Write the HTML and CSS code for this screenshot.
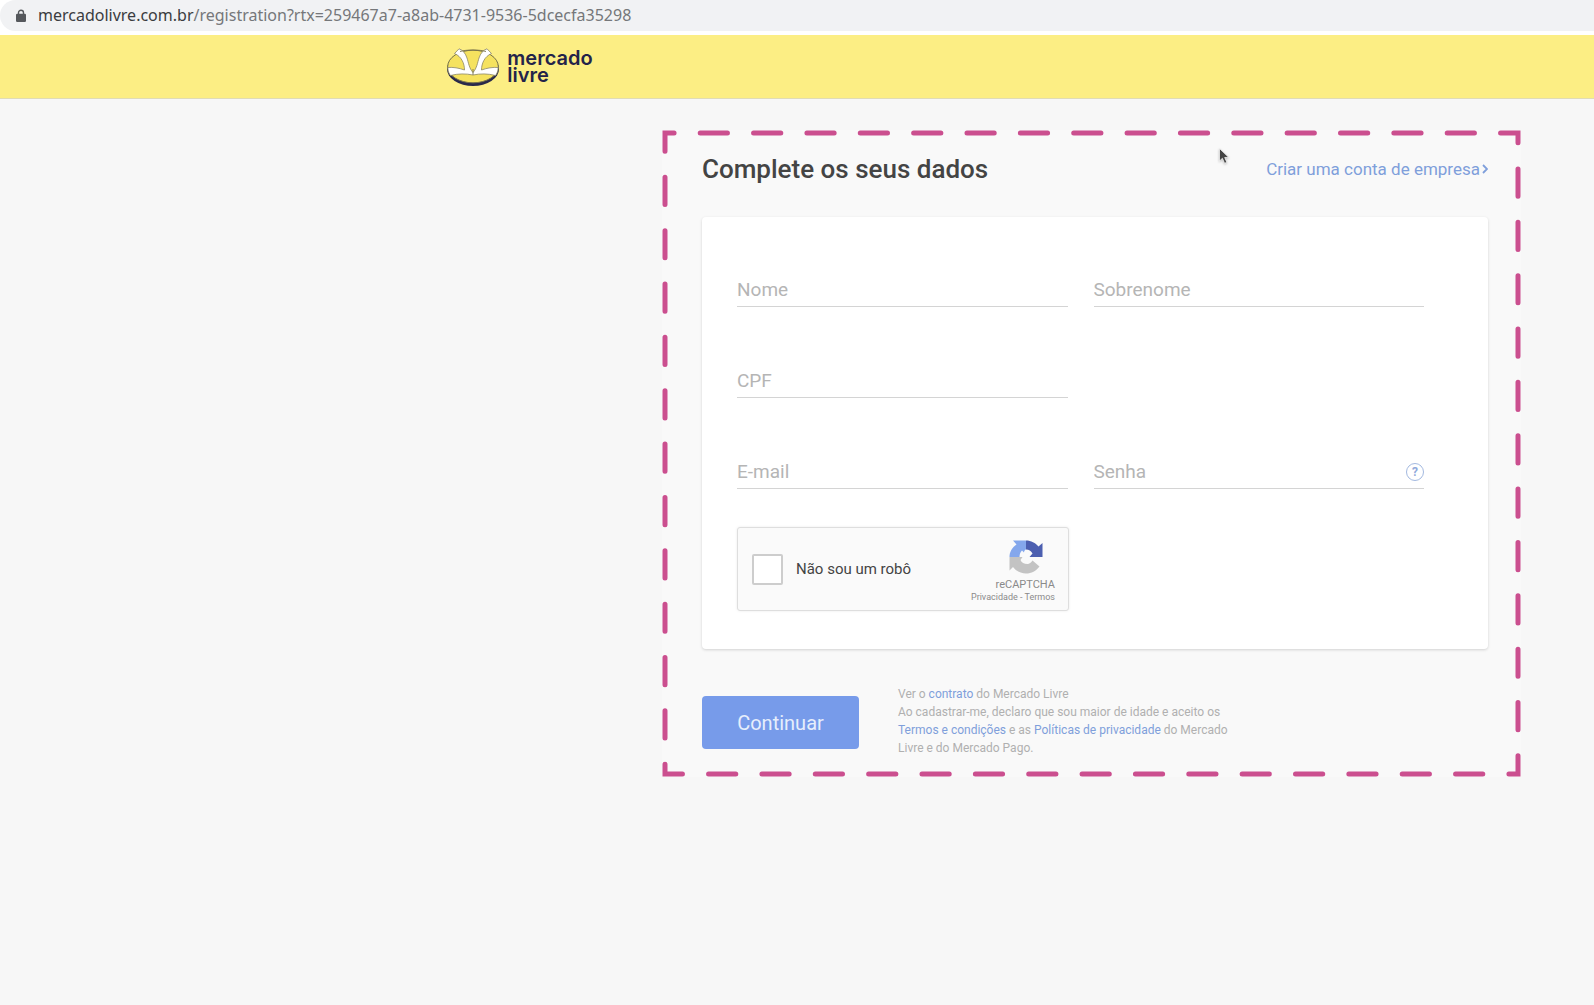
FILE: index.html
```html
<!DOCTYPE html>
<html lang="pt-BR">
<head>
<meta charset="utf-8">
<meta name="viewport" content="width=device-width, initial-scale=1">
<title>Mercado Livre</title>
<link rel="stylesheet" href="styles.css">
</head>
<body>
<div class="browser-bar">
  <div class="address">
    <svg class="lock" viewBox="0 0 10 13" aria-hidden="true"><path d="M2.5 6V3.7a2.5 2.5 0 0 1 5 0V6" fill="none" stroke="#55585c" stroke-width="1.4"/><rect y="4.8" width="10" height="8.2" rx="1.2" fill="#55585c"/></svg>
    <span class="url"><span class="host">mercadolivre.com.br</span>/registration?rtx=259467a7-a8ab-4731-9536-5dcecfa35298</span>
  </div>
</div>

<header class="site-header">
  <a class="logo" href="#" aria-label="Mercado Livre">
    <svg class="logo-mark" viewBox="0 0 54 38" aria-hidden="true">
      <ellipse cx="27" cy="21" rx="26" ry="17" fill="#29294a"/>
      <ellipse cx="27" cy="18.5" rx="25.3" ry="16.3" fill="#f5e25f" stroke="#77724a" stroke-width="1"/>
      <path d="M1.800 19.500C7 19 13 20 18.500 22C18.500 15.500 15.500 8.500 8.500 5.500L13 .8C17 2 19.500 5.500 21 10C22.500 14.500 23 20 27 24.500C31 20 31.500 14.500 33 10C34.500 5.500 37 2 41 .8L45.500 5.500C38.500 8.500 35.500 15.500 35.500 22C41 20 47 19 52.200 19.500C52 23.500 51 25.500 49.500 27.500C42 25.500 34 25.500 27 27C20 25.500 12 25.500 4.500 27.500C3 25.500 2 23.500 1.800 19.500Z" fill="#fff" stroke="#8b8763" stroke-width=".8" stroke-linejoin="round"/>
      <path d="M14 3.500C20 1.500 34 1.500 40 3.500M27 21V27" fill="none" stroke="#77724a" stroke-width=".9"/>
    </svg>
    <span class="logo-name">mercado<br>livre</span>
  </a>
</header>

<main class="page">
  <form class="signup">
    <svg class="outline" aria-hidden="true"><rect x="3" y="3" pathLength="5600"/></svg>
    <svg class="cursor" viewBox="0 0 10 16" aria-hidden="true"><path d="M.5.500V13L3.400 10.300L5.600 15.300L7.800 14.300L5.700 9.500L9.600 9.300Z" fill="#444" stroke="#fff" stroke-width=".7"/></svg>

    <div class="signup-head">
      <h1>Complete os seus dados</h1>
      <a class="company" href="#">Criar uma conta de empresa<svg class="chevron" viewBox="0 0 6 10" aria-hidden="true"><path d="M1 1L5 5L1 9" fill="none" stroke="currentColor" stroke-width="1.8"/></svg></a>
    </div>

    <div class="card">
      <div class="fields">
        <input class="field" type="text" placeholder="Nome" aria-label="Nome">
        <input class="field" type="text" placeholder="Sobrenome" aria-label="Sobrenome">
        <input class="field field-single" type="text" placeholder="CPF" aria-label="CPF">
        <input class="field" type="email" placeholder="E-mail" aria-label="E-mail">
        <div class="password">
          <input class="field" type="password" placeholder="Senha" aria-label="Senha">
          <button class="help" type="button">?</button>
        </div>
      </div>

      <div class="captcha">
        <input class="captcha-box" type="checkbox" id="robot">
        <label class="captcha-label" for="robot">Não sou um robô</label>
        <div class="captcha-brand">
          <svg class="captcha-mark" viewBox="0 0 34 34" aria-hidden="true">
            <path d="M17 .5H4L7.500 4.500C3 7.500.5 12 .5 17H10.500C10.500 14 11.500 12 13 10.500L15 12.500C15.200 10.800 16 9.800 17 9.500Z" fill="#84a7ec"/>
            <path d="M17 .5C22 .5 26.500 3 29.500 6.500L33.500 3V17H20.500L23.500 13.500C22 11 20 9.500 17 9.500Z" fill="#4c5fb0"/>
            <path d="M.5 17V30.500L4 27C7 31 12 33.500 17 33.500C22.500 33.500 27 31 30.500 26.500L23.500 20.500C22 22.800 20.500 23.800 18.500 24C15 24 12.500 22.500 11.500 20L13.500 17Z" fill="#c3c3c3"/>
          </svg>
          <span class="captcha-name">reCAPTCHA</span>
          <span class="captcha-links"><a href="#">Privacidade</a> - <a href="#">Termos</a></span>
        </div>
      </div>
    </div>

    <div class="actions">
      <button class="submit" type="submit">Continuar</button>
      <p class="legal">Ver o <a href="#">contrato</a> do Mercado Livre<br>Ao cadastrar-me, declaro que sou maior de idade e aceito os <a href="#">Termos e condições</a> e as <a href="#">Políticas de privacidade</a> do Mercado Livre e do Mercado Pago.</p>
    </div>
  </form>
</main>
</body>
</html>
```
FILE: styles.css
```css
* { box-sizing: border-box; }

body {
  margin: 0;
  background: #f7f7f7;
  color: #444;
  font-family: Roboto, "Liberation Sans", sans-serif;
}

a { color: #7f9fdb; text-decoration: none; }
svg { display: block; }

/* Browser address bar */
.browser-bar { background: #fff; padding-bottom: 4px; }
.address {
  display: flex;
  align-items: center;
  gap: 12px;
  height: 31px;
  padding-left: 16px;
  background: #f1f2f4;
  border-radius: 16px 0 0 16px;
}
.lock { width: 10px; height: 13px; }
.url {
  padding-bottom: 2px;
  color: #75777a;
  font-family: "Noto Sans", sans-serif;
  font-size: 16px;
  line-height: 28px;
  white-space: nowrap;
}
.host { color: #3a3c40; }

/* Site header */
.site-header {
  display: flex;
  align-items: center;
  height: 64px;
  padding-left: 28%;
  background: #fcee84;
  border-bottom: 1px solid #e0dcb6;
}
.logo { display: flex; align-items: center; gap: 7px; }
.logo-mark { width: 54px; height: 38px; }
.logo-name {
  color: #23234a;
  font-family: Inter, sans-serif;
  font-size: 20px;
  font-weight: 600;
  line-height: 17px;
}

/* Sign-up form */
.page { display: flex; justify-content: flex-end; padding: 31px 73px 40px 40px; }
.signup {
  position: relative;
  width: 100%;
  max-width: 859px;
  padding: 20px 33px 20px 40px;
  background: #f9f9f9;
}
.outline { position: absolute; inset: 0; width: 100%; height: 100%; pointer-events: none; }
.outline rect {
  width: calc(100% - 6px);
  height: calc(100% - 6px);
  fill: none;
  stroke: #cb4f8f;
  stroke-width: 5px;
  stroke-linecap: round;
  stroke-dasharray: 51 49;
  stroke-dashoffset: 34;
}
.cursor { position: absolute; top: 18px; left: 557px; width: 10px; height: 16px; filter: drop-shadow(0 1px 1px #bbb); }

.signup-head {
  display: flex;
  justify-content: space-between;
  align-items: center;
  margin-bottom: 29px;
}
h1 { margin: 0; font-size: 26px; font-weight: 500; line-height: 38px; }
.company { display: flex; align-items: center; gap: 2px; font-size: 17px; }
.chevron { width: 6px; height: 10px; }

.card {
  padding: 50px 64px 38px 35px;
  background: #fff;
  border-radius: 4px;
  box-shadow: 0 1px 3px rgba(0, 0, 0, .16);
}
.fields { display: grid; grid-template-columns: 1fr 1fr; gap: 51px 26px; }
.field {
  display: block;
  width: 100%;
  height: 40px;
  padding: 6px 0 0;
  border: 0;
  border-bottom: 1px solid #d4d4d4;
  background: none;
  color: #444;
  font-family: inherit;
  font-size: 19px;
  outline: 0;
}
.field::placeholder { color: #b5b5b5; opacity: 1; }
.field-single { grid-column: 1; }
.field-single + .field { grid-column: 1; }
.password { position: relative; }
.help {
  position: absolute;
  top: 14px;
  right: 0;
  width: 18px;
  height: 18px;
  padding: 0;
  border: 1px solid #a3b9e0;
  border-radius: 50%;
  background: none;
  color: #8fa9db;
  font-family: inherit;
  font-size: 12px;
  font-weight: 700;
  line-height: 16px;
}

.captcha {
  display: flex;
  align-items: center;
  width: 332px;
  max-width: 100%;
  height: 84px;
  margin-top: 38px;
  padding: 0 13px 0 14px;
  border: 1px solid #dedede;
  border-radius: 3px;
  background: #fafafa;
  box-shadow: 0 0 3px rgba(0, 0, 0, .08);
}
.captcha-box {
  appearance: none;
  width: 31px;
  height: 31px;
  margin: 0;
  border: 2px solid #cdcdcd;
  border-radius: 2px;
  background: #fff;
}
.captcha-label { margin-left: 13px; font-size: 15px; }
.captcha-brand {
  display: flex;
  flex-direction: column;
  align-items: flex-end;
  margin-left: auto;
  padding-top: 6px;
  color: #8a8a8a;
}
.captcha-mark { width: 34px; height: 34px; margin-right: 12px; }
.captcha-name { margin-top: 4px; font-size: 11px; line-height: 13px; }
.captcha-links { font-size: 9px; line-height: 13px; }
.captcha-links a { color: inherit; }

.actions { display: flex; align-items: flex-start; gap: 39px; margin-top: 36px; }
.submit {
  flex: none;
  width: 157px;
  height: 53px;
  margin-top: 11px;
  border: 0;
  border-radius: 4px;
  background: #779bea;
  color: #e6eefc;
  font-family: inherit;
  font-size: 20px;
}
.legal {
  max-width: 336px;
  margin: 0;
  color: #b0b0b0;
  font-size: 12px;
  line-height: 18px;
}
```
